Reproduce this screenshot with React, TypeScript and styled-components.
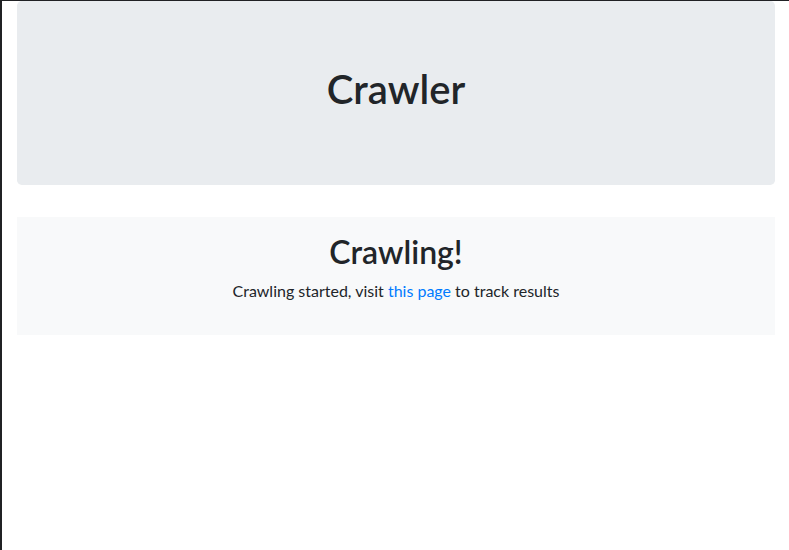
import React from "react";
import styled, { createGlobalStyle } from "styled-components";

const Global = createGlobalStyle`
  html, body { margin: 0; padding: 0; background: #fff; }
  body {
    font-family: Lato, "Noto Sans", sans-serif;
    font-size: 16px;
    line-height: 1.5;
    color: #212529;
    border-left: 2px solid #202124;
    border-top: 1px solid #202124;
    min-height: 550px;
    box-sizing: border-box;
  }
`;

const Page = styled.main`
  padding: 0 14px 0 15px;
`;

const Jumbotron = styled.header`
  background: #e9ecef;
  border-radius: 4.8px;
  padding: 64px 32px;
  margin-bottom: 32px;
  text-align: center;
`;

const Title = styled.h1`
  margin: 0 0 8px;
  font-size: 40px;
  font-weight: 600;
  line-height: 1.2;
`;

const Notice = styled.section`
  background: #f8f9fa;
  padding: 16px;
  text-align: center;
`;

const Heading = styled.h2`
  margin: 0 0 8px;
  font-size: 32px;
  font-weight: 600;
  line-height: 1.2;
`;

const Text = styled.p`
  margin: 0 0 16px;
`;

const Link = styled.a`
  color: #007bff;
  text-decoration: none;
`;

export default function App() {
  return (
    <Page>
      <Global />
      <Jumbotron>
        <Title>Crawler</Title>
      </Jumbotron>
      <Notice>
        <Heading>Crawling!</Heading>
        <Text>
          Crawling started, visit <Link href="#">this page</Link> to track results
        </Text>
      </Notice>
    </Page>
  );
}
